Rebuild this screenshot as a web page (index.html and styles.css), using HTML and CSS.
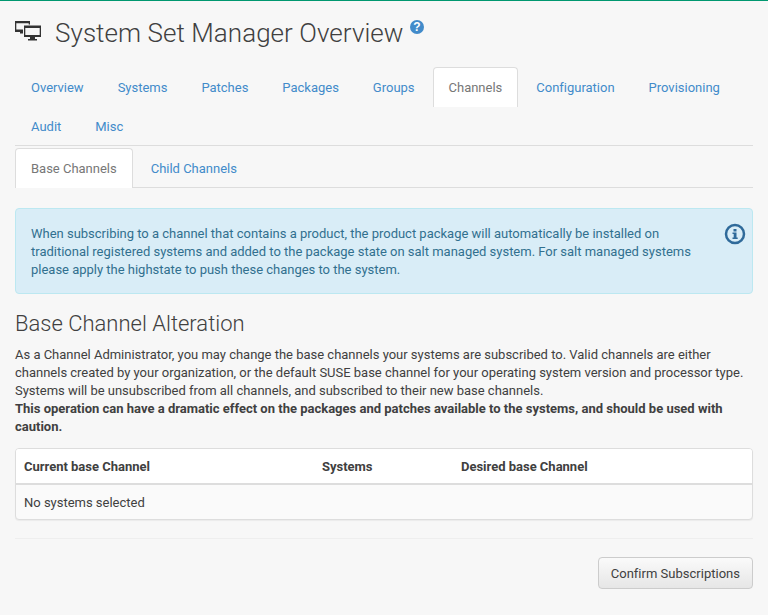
FILE: index.html
```html
<!DOCTYPE html>
<html lang="en">
<head>
    <meta charset="UTF-8">
    <title>System Set Manager Overview</title>
    <link rel="stylesheet" href="styles.css">
</head>
<body>
    <div id="container">
        <div class="page-title">
            <svg class="ssm-icon" width="26" height="20" viewBox="0 0 26 20">
                <path fill="#333" fill-rule="evenodd" d="M0 0h15v11H0zM1.300 2.300v6.200h12.400v-6.200z"/>
                <rect x="5" y="11" width="5" height="1.500" fill="#333"/>
                <rect x="8" y="3.500" width="18" height="14" fill="#f7f7f7"/>
                <path fill="#333" fill-rule="evenodd" d="M9 4.500h17v11.500H9zM10.300 7v7h14.400v-7z"/>
                <rect x="15" y="16" width="5" height="2" fill="#333"/>
                <rect x="13" y="18" width="9" height="1.500" fill="#333"/>
            </svg>
            <h1>System Set Manager Overview</h1>
            <svg class="help-icon" width="14" height="14" viewBox="0 0 14 14">
                <circle cx="7" cy="7" r="7" fill="#428bca"/>
                <text x="7" y="11" text-anchor="middle" class="help-mark">?</text>
            </svg>
        </div>
        <ul class="tabs main-tabs">
            <li><a href="#">Overview</a></li>
            <li><a href="#">Systems</a></li>
            <li><a href="#">Patches</a></li>
            <li><a href="#">Packages</a></li>
            <li><a href="#">Groups</a></li>
            <li class="active"><a href="#">Channels</a></li>
            <li><a href="#">Configuration</a></li>
            <li><a href="#">Provisioning</a></li>
            <li><a href="#">Audit</a></li>
            <li><a href="#">Misc</a></li>
        </ul>
        <ul class="tabs sub-tabs">
            <li class="active"><a href="#">Base Channels</a></li>
            <li><a href="#">Child Channels</a></li>
        </ul>
        <div class="alert-info">
            <p>When subscribing to a channel that contains a product, the product package will automatically be installed on traditional registered systems and added to the package state on salt managed system. For salt managed systems please apply the highstate to push these changes to the system.</p>
            <svg class="info-icon" width="22" height="22" viewBox="0 0 22 22">
                <circle cx="11" cy="11" r="9" fill="none" stroke="#2f6a9a" stroke-width="2.500"/>
                <rect x="9.500" y="6" width="3" height="2.500" fill="#2f6a9a"/>
                <path fill="#2f6a9a" d="M8.500 9.500h4v5h1.200v1.500H8.500v-1.500h1.200v-3.500H8.500z"/>
            </svg>
        </div>
        <h2>Base Channel Alteration</h2>
        <p class="intro">As a Channel Administrator, you may change the base channels your systems are subscribed to. Valid channels are either channels created by your organization, or the default SUSE base channel for your operating system version and processor type. Systems will be unsubscribed from all channels, and subscribed to their new base channels.<br><strong>This operation can have a dramatic effect on the packages and patches available to the systems, and should be used with caution.</strong></p>
        <div class="panel">
            <table>
                <thead>
                    <tr>
                        <th class="col-current">Current base Channel</th>
                        <th class="col-systems">Systems</th>
                        <th>Desired base Channel</th>
                    </tr>
                </thead>
                <tbody>
                    <tr>
                        <td colspan="3">No systems selected</td>
                    </tr>
                </tbody>
            </table>
        </div>
        <hr>
        <div class="actions">
            <button type="button" class="btn">Confirm Subscriptions</button>
        </div>
    </div>
</body>
</html>
```

FILE: styles.css
```css
* {
    box-sizing: border-box;
}
body {
    margin: 0;
    height: 615px;
    overflow: hidden;
    background: #f7f7f7;
    border-top: 1px solid #009870;
    font-family: Roboto, "Liberation Sans", sans-serif;
    font-size: 13px;
    line-height: 18px;
    letter-spacing: -0.01px;
    color: #404040;
}
strong {
    letter-spacing: 0;
}
a {
    color: #428bca;
    text-decoration: none;
}
#container {
    padding: 0 15px;
}
.page-title {
    display: flex;
    align-items: flex-start;
    height: 66px;
    padding-top: 16px;
}
.ssm-icon {
    margin-top: 4px;
    margin-right: 14px;
}
.page-title h1 {
    margin: 0;
    font-size: 26px;
    font-weight: 300;
    line-height: 32px;
    letter-spacing: 0.05px;
    color: #404040;
}
.help-icon {
    margin-left: 6px;
    margin-top: 3px;
}
.help-mark {
    font-family: "Liberation Sans", sans-serif;
    font-size: 12px;
    font-weight: bold;
    fill: #fff;
}
.tabs {
    display: flex;
    flex-wrap: wrap;
    list-style: none;
    margin: 0;
    padding: 0;
    border-bottom: 1px solid #ddd;
}
.tabs li {
    margin-bottom: -1px;
    margin-right: 2px;
}
.tabs a {
    display: block;
    height: 40px;
    padding: 11px 15px;
    border: 1px solid transparent;
    border-bottom: 0;
    border-radius: 4px 4px 0 0;
}
.tabs .active a {
    background: #fff;
    color: #777;
    border-color: #ddd;
}
.main-tabs li {
    height: 40px;
}
.sub-tabs {
    margin-top: 2px;
}
.alert-info {
    display: flex;
    justify-content: space-between;
    margin-top: 20px;
    height: 86px;
    padding: 16px 6px 14px 15px;
    background: #d9edf7;
    border: 1px solid #bce8f1;
    border-radius: 4px;
    color: #31708f;
}
.alert-info p {
    margin: 0;
    width: 675px;
}
.info-icon {
    flex: none;
    margin-top: -2px;
}
h2 {
    margin: 18px 0 10px;
    font-size: 22px;
    font-weight: 300;
    line-height: 24px;
    letter-spacing: 0;
    color: #404040;
}
.intro {
    margin: 0 0 12px;
}
.panel {
    background: #fafafa;
    border: 1px solid #ddd;
    border-radius: 4px;
    box-shadow: 0 1px 1px rgba(0, 0, 0, 0.05);
    overflow: hidden;
}
table {
    width: 100%;
    border-collapse: collapse;
}
th {
    height: 35px;
    padding: 2px 8px 0;
    text-align: left;
    background: #fff;
    border-bottom: 2px solid #ddd;
}
.col-current {
    width: 298px;
}
.col-systems {
    width: 139px;
}
td {
    height: 35px;
    padding: 2px 8px 0;
}
hr {
    margin: 18px 0;
    border: 0;
    border-top: 1px solid #eee;
}
.actions {
    display: flex;
    justify-content: flex-end;
}
.btn {
    height: 32px;
    padding: 0 12px;
    font-family: inherit;
    font-size: 13px;
    letter-spacing: 0.01px;
    color: #404040;
    background: linear-gradient(#fafafa, #e6e6e6);
    border: 1px solid #ccc;
    border-radius: 4px;
}
```
